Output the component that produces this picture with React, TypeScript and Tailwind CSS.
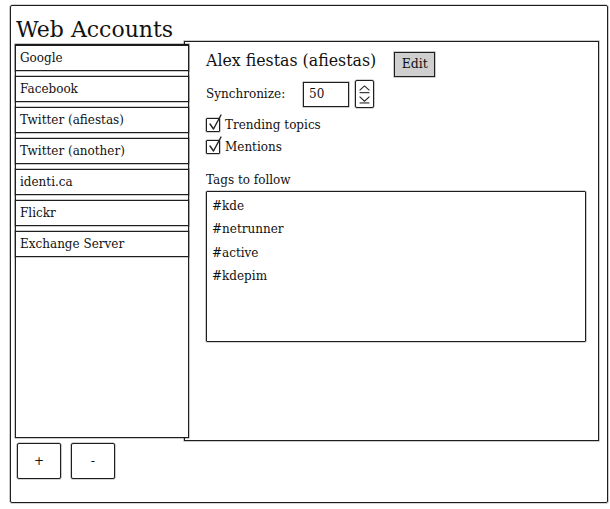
import { useState } from 'react'

// Balsamiq-style wireframe of the KDE "Web Accounts" settings page.
const ACCOUNTS = ['Google', 'Facebook', 'Twitter (afiestas)', 'Twitter (another)', 'identi.ca', 'Flickr', 'Exchange Server']
const TAGS = ['#kde', '#netrunner', '#active', '#kdepim']

const line = 'border border-[#1e1e1e] shadow-[0_0_0_0.6px_rgba(0,0,0,0.35)]'

function Check() {
  return (
    <span className={`${line} relative flex h-[14px] w-[14px] shrink-0 rounded-[1px] bg-white`}>
      <svg viewBox="0 0 16 16" className="absolute -top-[5px] left-[1px] h-[16px] w-[16px] overflow-visible">
        <path d="M2 10 L5.5 15 L13 1" fill="none" stroke="#222" strokeWidth="1.4" strokeLinecap="round" strokeLinejoin="round" />
      </svg>
    </span>
  )
}

function Spinner() {
  return (
    <span className={`${line} flex h-[28px] w-[19px] rounded-[2px] bg-white`}>
      <svg viewBox="0 0 19 28" className="h-full w-full">
        <path d="M4 10 L9.5 5 L15 10" fill="none" stroke="#222" strokeWidth="1.2" />
        <path d="M4 12.5 H15" stroke="#222" strokeWidth="1.2" />
        <path d="M4 17 L9.5 22 L15 17" fill="none" stroke="#222" strokeWidth="1.2" />
        <path d="M4 24 H15" stroke="#222" strokeWidth="1.2" />
      </svg>
    </span>
  )
}

export default function App() {
  const [sync, setSync] = useState('50')
  const [trending, setTrending] = useState(true)
  const [mentions, setMentions] = useState(true)

  return (
    <div className="h-[509px] w-[610px] bg-white pl-[10px] pt-[5px] font-['DejaVu_Serif',serif] text-[#111]">
      <div className={`${line} h-[498px] w-[598px] rounded-[2px] pl-[4px]`}>
        <h1 className="pl-[1px] pt-[12px] text-[22px] leading-[24px] font-normal">Web Accounts</h1>

        <div className="-mt-px flex items-start">
          <ul className={`${line} relative z-10 mt-[3px] flex h-[394px] w-[174px] flex-col gap-[5px] bg-white`}>
            {ACCOUNTS.map((name) => (
              <li key={name} className={`${line} -mx-px flex h-[26px] cursor-default items-center bg-white pl-[4px] text-[12px]`}>
                {name}
              </li>
            ))}
          </ul>

          <section className={`${line} -ml-[5px] flex h-[400px] w-[415px] flex-col pl-[21px] pt-[8px]`}>
            <div className="flex items-start">
              <h2 className="mt-px text-[15.8px] leading-[20px] font-normal">Alex fiestas (afiestas)</h2>
              <button className={`${line} ml-[18px] mt-[2px] h-[25px] w-[41px] bg-[#cfcfcf] text-[12.5px]`}>Edit</button>
            </div>

            <div className="mt-[3px] flex h-[28px] items-center text-[12px]">
              <span className="w-[97px]">Synchronize:</span>
              <input
                value={sync}
                onChange={(e) => setSync(e.target.value)}
                className={`${line} h-[25px] w-[46px] bg-white pl-[5px] text-[12px] outline-none`}
              />
              <span className="ml-[6px]">
                <Spinner />
              </span>
            </div>

            <label className="mt-[8px] flex h-[18px] items-center gap-[5px] text-[12px]" onClick={() => setTrending(!trending)}>
              {trending ? <Check /> : <span className={`${line} h-[14px] w-[14px]`} />}
              Trending topics
            </label>
            <label className="mt-[4px] flex h-[18px] items-center gap-[5px] text-[12px]" onClick={() => setMentions(!mentions)}>
              {mentions ? <Check /> : <span className={`${line} h-[14px] w-[14px]`} />}
              Mentions
            </label>

            <div className="mt-[16px] text-[12px] leading-[16px]">Tags to follow</div>
            <div className={`${line} mt-[3px] h-[151px] w-[380px] rounded-[1px] px-[5px] pt-[3px] text-[12px]`}>
              {TAGS.map((t) => (
                <div key={t} className="leading-[23.4px]">
                  {t}
                </div>
              ))}
            </div>
          </section>
        </div>

        <div className="ml-[2px] mt-[2px] flex gap-[10px] font-['DejaVu_Sans',sans-serif] text-[12px]">
          <button className={`${line} flex h-[36px] w-[44px] items-center justify-center rounded-[2px] bg-white`}>+</button>
          <button className={`${line} flex h-[36px] w-[44px] items-center justify-center rounded-[2px] bg-white`}>-</button>
        </div>
      </div>
    </div>
  )
}
